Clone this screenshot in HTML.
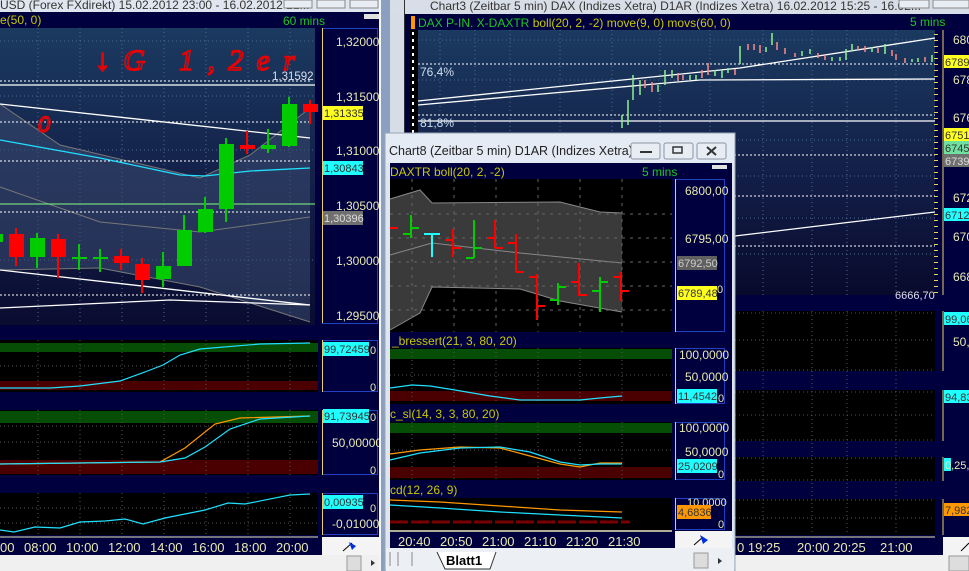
<!DOCTYPE html><html><head><meta charset="utf-8"><style>
html,body{margin:0;padding:0;width:969px;height:571px;overflow:hidden;background:#d6dde7}
svg{display:block;font-family:"Liberation Sans",sans-serif;font-size:11px}
</style></head><body>
<svg width="969" height="571" viewBox="0 0 969 571" xmlns="http://www.w3.org/2000/svg">
<defs>
<linearGradient id="g1" x1="0" y1="0" x2="0" y2="1"><stop offset="0" stop-color="#1b3a60"/><stop offset="0.6" stop-color="#121c45"/><stop offset="1" stop-color="#0a0c30"/></linearGradient>
<linearGradient id="g2" x1="0" y1="0" x2="0" y2="1"><stop offset="0" stop-color="#1b3a60"/><stop offset="0.6" stop-color="#121c45"/><stop offset="1" stop-color="#080a2c"/></linearGradient>
</defs>
<rect width="969" height="571" fill="#d6dde7"/>
<rect x="0" y="0" width="381" height="12" fill="#dfe6ef"/>
<text x="0" y="9" fill="#333" font-size="12">USD (Forex FXdirekt) 15.02.2012 23:00 - 16.02.2012 21...</text>
<rect x="284" y="0" width="28" height="8" fill="#e8edf3" stroke="#888"/><rect x="317" y="0" width="28" height="8" fill="#e8edf3" stroke="#888"/><rect x="350" y="0" width="28" height="8" fill="#e8edf3" stroke="#888"/>
<rect x="0" y="12" width="381" height="543" fill="#00003f"/>
<text x="0" y="24" fill="#c8c800" font-size="12">e(50, 0)</text>
<text x="283" y="25" fill="#1ec81e" font-size="12">60 mins</text>
<rect x="364" y="14" width="15" height="5" fill="#e0e0e0"/>
<rect x="0" y="28" width="315" height="297" fill="url(#g1)"/>
<g stroke="#4a6a90" stroke-dasharray="1,3">
<path d="M38 28V323M80 28V323M122 28V323M164 28V323M206 28V323M248 28V323M290 28V323"/>
<path d="M0 41H315M0 96H315M0 150H315M0 260H315"/>
</g>
<path d="M0 104L60 145L200 178L250 155L310 108L310 322L200 287L100 268L0 270Z" fill="#3a4a70" opacity="0.55"/>
<polyline points="0,104 60,145 200,178 250,155 310,108" fill="none" stroke="#777"/>
<polyline points="0,187 100,222 200,232 310,217" fill="none" stroke="#777"/>
<polyline points="0,270 100,268 200,287 310,322" fill="none" stroke="#777"/>
<g stroke="#fff" stroke-width="1.3" fill="none">
<path d="M0 85H315"/><polyline points="0,104 310,138"/><polyline points="0,270 310,305"/><polyline points="0,308 170,300 310,305"/>
</g>
<g stroke="#fff" stroke-dasharray="2,2"><path d="M0 81H312M0 122H312M0 161H312M0 212H312M0 295H312"/></g>
<path d="M0 204H315" stroke="#80ff80"/>
<polyline points="0,140 100,158 180,175 205,176 250,171 310,168" fill="none" stroke="#20e0ff" stroke-width="1.3"/>
<text x="272" y="80" fill="#dde" font-size="11.5">1,31592</text>
<g stroke-width="2">
<path d="M16 228V266M37 233V268M58 234V278M79 244V270M100 249V272M121 249V270M142 258V293M163 252V287M184 215V266M205 197V233M226 138V222M247 131V154M268 129V153M289 97V147M310 100V124" stroke="#0c0"/>
<path d="M16 228V266M58 234V278M121 249V270M142 258V293M247 131V154M310 100V124" stroke="#f00"/>
</g>
<g>
<rect x="0" y="234" width="3" height="8" fill="#0c0"/>
<rect x="9" y="234" width="15" height="23" fill="#f00"/>
<rect x="30" y="238" width="15" height="19" fill="#0c0"/>
<rect x="51" y="239" width="15" height="18" fill="#f00"/>
<rect x="72" y="257" width="15" height="2" fill="#0c0"/>
<rect x="93" y="257" width="15" height="2" fill="#0c0"/>
<rect x="114" y="256" width="15" height="7" fill="#f00"/>
<rect x="135" y="264" width="15" height="16" fill="#f00"/>
<rect x="156" y="266" width="15" height="13" fill="#0c0"/>
<rect x="177" y="230" width="15" height="36" fill="#0c0"/>
<rect x="198" y="209" width="15" height="23" fill="#0c0"/>
<rect x="219" y="144" width="15" height="65" fill="#0c0"/>
<rect x="240" y="145" width="15" height="4" fill="#f00"/>
<rect x="261" y="145" width="15" height="4" fill="#0c0"/>
<rect x="282" y="104" width="15" height="42" fill="#0c0"/>
<rect x="303" y="104" width="15" height="8" fill="#f00"/>
</g>
<text x="95" y="70" fill="none" stroke="#e00" stroke-width="1.6" font-size="30" font-style="italic" font-family="Liberation Serif,DejaVu Sans,serif" textLength="200">↓G 1,2er</text>
<text x="38" y="132" fill="none" stroke="#e00" stroke-width="1.5" font-size="22" font-style="italic">0</text>
<rect x="322.5" y="28.5" width="55" height="295" fill="#00003f" stroke="#2040c0"/>
<path d="M322.5 28V323" stroke="#e8d060"/>
<g fill="#e8e8b0" font-size="12"><text x="336" y="46">1,32000</text><text x="336" y="101">1,31500</text><text x="336" y="155">1,31000</text><text x="336" y="210">1,30500</text><text x="336" y="265">1,30000</text><text x="336" y="320">1,29500</text></g>
<rect x="323" y="106" width="40" height="14" fill="#ffff20"/><text x="324" y="117" fill="#333">1,31335</text>
<rect x="323" y="161" width="40" height="14" fill="#20ffff"/><text x="324" y="172" fill="#333">1,30843</text>
<rect x="323" y="211" width="40" height="14" fill="#707070"/><text x="324" y="222" fill="#ddd">1,30396</text>
<rect x="0" y="340" width="318" height="52" fill="#000"/>
<rect x="0" y="343" width="318" height="9" fill="#064d06"/><rect x="0" y="381" width="318" height="9" fill="#4a0000"/>
<g stroke="#555" stroke-dasharray="1,3"><path d="M38 340V392M80 340V392M122 340V392M164 340V392M206 340V392M248 340V392M290 340V392M0 366H318"/></g>
<polyline points="0,388 50,388 80,386 120,381 145,372 163,365 180,355 200,349 260,344 310,343" fill="none" stroke="#20e0ff" stroke-width="1.2"/>
<rect x="322.5" y="340.5" width="55" height="51" fill="#00003f" stroke="#2040c0"/><path d="M322.5 340V392" stroke="#e8d060"/>
<rect x="323" y="342" width="46" height="14" fill="#20ffff"/><text x="324" y="353" fill="#333">99,72459</text><text x="370" y="354" fill="#e8e8b0">0</text>
<text x="370" y="391" fill="#e8e8b0">0</text>
<rect x="0" y="410" width="318" height="65" fill="#000"/>
<rect x="0" y="411" width="318" height="12" fill="#064d06"/><rect x="0" y="460" width="318" height="14" fill="#4a0000"/>
<g stroke="#555" stroke-dasharray="1,3"><path d="M38 410V475M80 410V475M122 410V475M164 410V475M206 410V475M248 410V475M290 410V475M0 426H318M0 442H318"/></g>
<polyline points="0,464 160,462 185,448 215,424 240,418 310,416" fill="none" stroke="#ff9800" stroke-width="1.2"/>
<polyline points="0,464 160,462 185,458 205,447 230,429 260,419 310,416" fill="none" stroke="#20e0ff" stroke-width="1.2"/>
<rect x="322.5" y="410.5" width="55" height="64" fill="#00003f" stroke="#2040c0"/><path d="M322.5 410V475" stroke="#e8d060"/>
<rect x="323" y="409" width="46" height="14" fill="#20ffff"/><text x="324" y="420" fill="#333">91,73945</text><text x="370" y="421" fill="#e8e8b0">0</text>
<text x="332" y="447" fill="#e8e8b0" font-size="12">50,00000</text><text x="370" y="474" fill="#e8e8b0">0</text>
<rect x="0" y="493" width="318" height="42" fill="#000"/>
<g stroke="#555" stroke-dasharray="1,3"><path d="M38 493V535M80 493V535M122 493V535M164 493V535M206 493V535M248 493V535M290 493V535M0 508H318M0 523H318"/></g>
<polyline points="0,530 14,532 35,527 60,528 80,522 105,521 125,519 143,524 165,518 205,510 228,503 245,504 290,495 310,494" fill="none" stroke="#20e0ff" stroke-width="1.2"/>
<rect x="322.5" y="493.5" width="55" height="41" fill="#00003f" stroke="#2040c0"/><path d="M322.5 493V535" stroke="#e8d060"/>
<rect x="323" y="495" width="40" height="14" fill="#20ffff"/><text x="324" y="506" fill="#333">0,00935</text>
<text x="370" y="512" fill="#e8e8b0">0</text><text x="332" y="528" fill="#e8e8b0" font-size="12">-0,01000</text>
<path d="M0 537H318" stroke="#e8e8b0"/>
<g fill="#e8e8b0" font-size="13"><text x="0" y="552">00</text><text x="24" y="552">08:00</text><text x="66" y="552">10:00</text><text x="108" y="552">12:00</text><text x="150" y="552">14:00</text><text x="192" y="552">16:00</text><text x="234" y="552">18:00</text><text x="276" y="552">20:00</text></g>
<rect x="322" y="537" width="59" height="18" fill="#f4f4f4"/>
<path d="M343 551L352 543" stroke="#000"/><path d="M349 542L356 546L352 550Z" fill="#0030e0"/>
<rect x="0" y="555" width="381" height="16" fill="#f0f0f0"/>
<rect x="347" y="556" width="14" height="15" fill="#ddd" stroke="#999"/>
<path d="M371 560L375 563L371 566Z" fill="#333"/>
<rect x="379" y="0" width="2" height="571" fill="#f5f5f5"/>
<rect x="381" y="0" width="9" height="571" fill="#8aa0c0"/>
<rect x="390" y="0" width="579" height="14" fill="#d8dee7"/>
<rect x="404" y="0" width="1" height="571" fill="#333"/>
<text x="430" y="10" fill="#333" font-size="12">Chart3 (Zeitbar 5 min)  DAX (Indizes Xetra) D1AR (Indizes Xetra) 16.02.2012 15:25 - 16.02...</text>
<rect x="899" y="0" width="30" height="8" fill="#e8edf3" stroke="#888"/><rect x="933" y="0" width="36" height="8" fill="#e8edf3" stroke="#888"/>
<rect x="405" y="14" width="564" height="541" fill="#00003f"/>
<rect x="411" y="16" width="4" height="13" fill="#ff9800"/>
<text x="418" y="27" fill="#1ec81e" font-size="12">DAX P-IN. X-DAXTR <tspan fill="#c8c800">boll(20, 2, -2) move(9, 0) movs(60, 0)</tspan></text>
<text x="910" y="26" fill="#1ec81e" font-size="12">5 mins</text>
<rect x="410" y="30" width="8" height="265" fill="#000"/>
<path d="M413 32V295" stroke="#fff" stroke-dasharray="3,4" stroke-width="2"/>
<rect x="418" y="30" width="517" height="265" fill="url(#g2)"/>
<g stroke="#4a6a90" stroke-dasharray="1,3"><path d="M440 30V295M475 30V295M510 30V295M560 30V295M612 30V295M660 30V295M710 30V295M763 30V295M812 30V295M847 30V295M896 30V295M418 40H935M418 80H935M418 140H935M418 176H935M418 218H935M418 254H935"/></g>
<g stroke="#fff" stroke-dasharray="2,2"><path d="M418 64H935M418 115H935M418 155H935M418 196H935M418 246H935"/></g>
<g stroke="#fff" stroke-width="1.3" fill="none"><polyline points="418,101 740,68 935,38"/><polyline points="418,105 700,80 935,79"/><path d="M418 121H935"/><polyline points="735,236 935,212"/></g>
<text x="420" y="76" fill="#cde" font-size="12">76,4%</text><text x="420" y="127" fill="#cde" font-size="12">81,8%</text>
<text x="895" y="299" fill="#dde" font-size="11">6666,70</text>
<g stroke-width="1.5">
<path d="M622 115V128M628 100V125M633 75V100M640 80V95M658 85V92M665 70V85M672 70V78M690 75V80M696 75V80M715 70V76M722 70V78M728 68V73M740 46V64M766 47V52M772 33V45M802 51V56M810 49V54M832 57V61M840 57V61M846 49V60M852 44V51M872 47V52M885 44V54M912 59V62M918 58V62M932 55V62" stroke="#90f090"/>
<path d="M645 80V88M652 82V92M678 73V81M683 75V80M702 70V78M708 63V75M735 69V75M748 44V50M754 44V50M760 45V53M777 42V50M785 48V54M795 53V57M818 53V58M825 55V60M858 46V50M865 46V52M878 48V53M892 50V56M896 54V60M905 58V63M925 57V62" stroke="#ff8a8a"/>
</g>
<rect x="943" y="30" width="26" height="265" fill="#00003f"/>
<path d="M943 30V295" stroke="#e8d060"/><path d="M936 34V295" stroke="#e8d060" stroke-dasharray="1,5" stroke-width="4"/>
<g fill="#e8e8b0" font-size="12"><text x="953" y="44">680</text><text x="953" y="84">678</text><text x="953" y="122">676</text><text x="953" y="202">672</text><text x="953" y="241">670</text><text x="953" y="281">668</text></g>
<rect x="944" y="55" width="25" height="13" fill="#ffff20"/><text x="945" y="66" fill="#333">6789</text>
<rect x="944" y="128" width="25" height="13" fill="#ffff20"/><text x="945" y="139" fill="#333">6751</text>
<rect x="944" y="141" width="25" height="13" fill="#70e0a0"/><text x="945" y="152" fill="#333">6745</text>
<rect x="944" y="154" width="25" height="13" fill="#707070"/><text x="945" y="165" fill="#ddd">6739</text>
<rect x="944" y="208" width="25" height="13" fill="#20ffff"/><text x="945" y="219" fill="#333">6712</text>
<g fill="#000"><rect x="410" y="311" width="525" height="60"/><rect x="410" y="390" width="525" height="51"/><rect x="410" y="457" width="525" height="24"/><rect x="410" y="499" width="525" height="36"/></g>
<g stroke="#555" stroke-dasharray="1,3"><path d="M763 311V535M812 311V535M847 311V535M896 311V535M735 313H935M735 340H935M735 370H935M735 392H935M735 415H935M735 440H935M735 458H935M735 480H935M735 500H935M735 518H935"/></g>
<g fill="#00003f"><rect x="943" y="311" width="26" height="60"/><rect x="943" y="390" width="26" height="51"/><rect x="943" y="457" width="26" height="24"/><rect x="943" y="499" width="26" height="36"/></g>
<path d="M943 311V371M943 390V441M943 457V481M943 499V535" stroke="#e8d060"/>
<rect x="944" y="312" width="25" height="13" fill="#20ffff"/><text x="945" y="323" fill="#333">99,06</text>
<text x="953" y="346" fill="#e8e8b0" font-size="12">50,0</text>
<rect x="944" y="390" width="25" height="13" fill="#20ffff"/><text x="945" y="401" fill="#333">94,83</text>
<rect x="944" y="458" width="7" height="13" fill="#20ffff"/><text x="945" y="469" fill="#e8e8b0">0,25,0</text>
<rect x="944" y="503" width="25" height="13" fill="#ff9800"/><text x="945" y="514" fill="#333">7,982</text>
<path d="M735 537H935" stroke="#e8e8b0"/>
<g fill="#e8e8b0" font-size="13"><text x="737" y="552">0 19:25</text><text x="797" y="552">20:00 20:25</text><text x="880" y="552">21:00</text></g>
<rect x="943" y="537" width="26" height="18" fill="#f4f4f4"/><path d="M961 551L969 543" stroke="#000"/>
<rect x="735" y="555" width="234" height="16" fill="#f0f0f0"/><rect x="949" y="556" width="20" height="15" fill="#ddd" stroke="#999"/>
<rect x="385" y="133" width="350" height="438" fill="#dfe6ef" stroke="#9aa8b8"/>
<rect x="386" y="134" width="348" height="29" fill="#e4ebf4"/>
<text x="389" y="155" fill="#222" font-size="12.5">Chart8 (Zeitbar 5 min)  D1AR (Indizes Xetra)...</text>
<g fill="#e8edf3" stroke="#8a96a6"><rect x="631" y="143" width="29" height="16" rx="2"/><rect x="664" y="143" width="29" height="16" rx="2"/><rect x="697" y="143" width="29" height="16" rx="2"/></g>
<path d="M640 152H652" stroke="#333" stroke-width="2"/><rect x="673" y="147" width="9" height="6" fill="none" stroke="#333" stroke-width="1.5"/><path d="M707 147L716 155M716 147L707 155" stroke="#333" stroke-width="2"/>
<rect x="390" y="163" width="342" height="385" fill="#00003f"/>
<text x="390" y="176" fill="#c8c800" font-size="12">DAXTR boll(20, 2, -2)</text><text x="642" y="176" fill="#1ec81e" font-size="12">5 mins</text>
<rect x="712" y="165" width="15" height="4" fill="#e0e0e0"/>
<rect x="390" y="179" width="282" height="153" fill="#000"/>
<path d="M390 199L420 190L432 203L560 202L600 212L622 213L622 312L560 301L520 289L432 287L420 313L390 330Z" fill="#3a3a3a"/>
<polyline points="390,199 420,190 432,203 560,202 600,212 622,213" fill="none" stroke="#888"/>
<polyline points="390,330 420,313 432,287 520,289 560,301 622,312" fill="none" stroke="#888"/>
<polyline points="390,255 432,243 520,253 622,263" fill="none" stroke="#888"/>
<g stroke="#666" stroke-dasharray="3,5"><path d="M412 179V332M454 179V332M496 179V332M538 179V332M580 179V332M622 179V332M390 214H672M390 238H672M390 262H672M390 286H672M390 310H672"/></g>
<g stroke-width="2" fill="none">
<path d="M390 228H398M453 229V257M445 240H453M453 248H461M495 220V248M487 238H495M495 248H503M516 234V272M508 243H516M516 272H524M537 274V320M529 277H537M537 306H545M579 263V296M571 282H579M579 295H587M621 272V301M613 277H621M621 291H629" stroke="#f00"/>
<path d="M411 215V238M403 234H411M411 228H419M474 220V258M466 258H474M474 248H482M558 283V305M550 300H558M558 287H566M600 277V312M592 291H600M600 282H608" stroke="#0c0"/>
<path d="M424 234H440M432 234V257" stroke="#20ffff"/>
</g>
<rect x="675.5" y="179.5" width="49" height="152" fill="#00003f" stroke="#2040c0"/><path d="M675.5 179V332" stroke="#e8d060"/>
<g fill="#e8e8b0" font-size="12"><text x="685" y="195">6800,00</text><text x="685" y="243">6795,00</text></g>
<rect x="677" y="256" width="40" height="14" fill="#606060"/><text x="678" y="267" fill="#ccc">6792,50</text>
<rect x="677" y="286" width="40" height="14" fill="#ffff20"/><text x="678" y="297" fill="#333">6789,48</text><text x="717" y="293" fill="#e8e8b0">0</text>
<text x="392" y="345" fill="#c8c800" font-size="12">_bressert(21, 3, 80, 20)</text>
<rect x="390" y="348" width="282" height="56" fill="#000"/>
<rect x="390" y="349" width="282" height="10" fill="#064d06"/><rect x="390" y="391" width="282" height="10" fill="#4a0000"/>
<g stroke="#555" stroke-dasharray="1,3"><path d="M412 348V404M454 348V404M496 348V404M538 348V404M580 348V404M622 348V404M390 375H672"/></g>
<polyline points="390,388 412,385 430,386 455,390 490,396 520,400 580,400 600,398 622,396" fill="none" stroke="#20e0ff" stroke-width="1.2"/>
<rect x="675.5" y="348.5" width="49" height="55" fill="#00003f" stroke="#2040c0"/><path d="M675.5 348V404" stroke="#e8d060"/>
<text x="679" y="359" fill="#e8e8b0" font-size="12">100,0000</text><text x="685" y="381" fill="#e8e8b0" font-size="12">50,0000</text>
<rect x="677" y="389" width="40" height="14" fill="#20ffff"/><text x="678" y="400" fill="#333">11,4542</text><text x="718" y="402" fill="#e8e8b0">0</text>
<text x="390" y="418" fill="#c8c800" font-size="12">c_sl(14, 3, 3, 80, 20)</text>
<rect x="390" y="422" width="282" height="58" fill="#000"/>
<rect x="390" y="423" width="282" height="10" fill="#064d06"/><rect x="390" y="467" width="282" height="11" fill="#4a0000"/>
<g stroke="#555" stroke-dasharray="1,3"><path d="M412 422V480M454 422V480M496 422V480M538 422V480M580 422V480M622 422V480M390 450H672"/></g>
<polyline points="390,454 420,450 460,447 500,448 530,456 560,464 580,467 600,463 622,463" fill="none" stroke="#ff9800" stroke-width="1.2"/>
<polyline points="390,460 420,453 460,448 500,447 530,452 560,462 580,465 600,464 622,464" fill="none" stroke="#20e0ff" stroke-width="1.2"/>
<rect x="675.5" y="422.5" width="49" height="57" fill="#00003f" stroke="#2040c0"/><path d="M675.5 422V480" stroke="#e8d060"/>
<text x="679" y="432" fill="#e8e8b0" font-size="12">100,0000</text><text x="685" y="456" fill="#e8e8b0" font-size="12">50,0000</text>
<rect x="677" y="459" width="40" height="14" fill="#20ffff"/><text x="678" y="470" fill="#333">25,0209</text><text x="718" y="478" fill="#e8e8b0">0</text>
<text x="390" y="494" fill="#c8c800" font-size="12">cd(12, 26, 9)</text>
<rect x="390" y="498" width="282" height="32" fill="#000"/>
<polyline points="390,500 440,502 500,506 560,510 622,512" fill="none" stroke="#ff9800" stroke-width="1.2"/>
<polyline points="390,505 440,508 500,512 560,515 622,518" fill="none" stroke="#20e0ff" stroke-width="1.2"/>
<path d="M390 522H630" stroke="#7a0000" stroke-width="3" stroke-dasharray="18,3"/>
<rect x="675.5" y="498.5" width="49" height="31" fill="#00003f" stroke="#2040c0"/><path d="M675.5 498V530" stroke="#e8d060"/>
<text x="687" y="506" fill="#e8e8b0">10,0000</text>
<rect x="677" y="505" width="34" height="14" fill="#ff9800"/><text x="678" y="516" fill="#333">4,6836</text><text x="718" y="528" fill="#e8e8b0">0</text>
<path d="M390 531H672" stroke="#e8e8b0" stroke-width="1.5"/>
<g fill="#e8e8b0" font-size="13"><text x="398" y="546">20:40</text><text x="440" y="546">20:50</text><text x="482" y="546">21:00</text><text x="524" y="546">21:10</text><text x="566" y="546">21:20</text><text x="608" y="546">21:30</text></g>
<rect x="675" y="531" width="57" height="17" fill="#f4f4f4"/><path d="M694 545L703 537" stroke="#000"/><path d="M700 535L708 540L703 544Z" fill="#0030e0"/>
<rect x="386" y="548" width="348" height="23" fill="#eceff3"/>
<path d="M390 552V566M398 552V566M412 552V566" stroke="#888"/>
<path d="M437 552L445 569H490L496 552" fill="#fff" stroke="#333"/>
<text x="446" y="565" fill="#000" font-weight="bold" font-size="13">Blatt1</text>
<rect x="694" y="553" width="14" height="15" fill="#ddd" stroke="#999"/>
<path d="M718 558L722 561L718 564Z" fill="#333"/>
</svg>
</body></html>
